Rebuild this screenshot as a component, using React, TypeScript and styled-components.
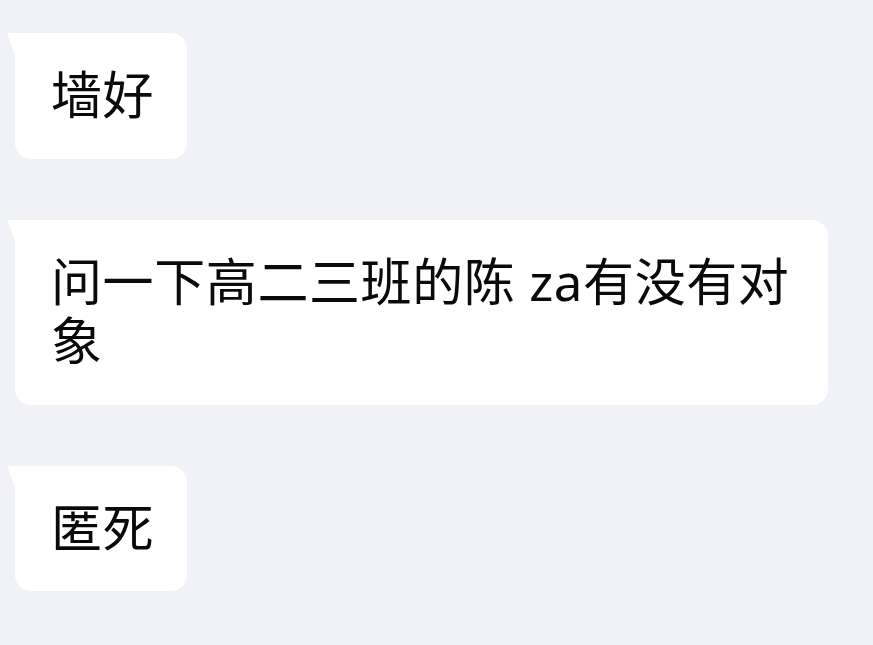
import React from 'react';
import styled, { createGlobalStyle } from 'styled-components';

const GlobalStyle = createGlobalStyle`
    html, body {
        margin: 0;
        padding: 0;
        background-color: #f1f2f7;
    }
`;

const ChatContainer = styled.div`
    display: flex;
    flex-direction: column;
    align-items: flex-start;
    gap: 61px;
    width: 873px;
    height: 645px;
    padding: 33px 0 0 15px;
    box-sizing: border-box;
    background-color: #f1f2f7;
    overflow: hidden;
`;

const Bubble = styled.div`
    position: relative;
    max-width: 813px;
    padding: 32px 33px 34px 36px;
    box-sizing: border-box;
    background-color: #ffffff;
    border-radius: 0 16px 16px 16px;
    color: #0a0a0a;
    font-family: 'Noto Sans', 'Noto Sans CJK SC', sans-serif;
    font-size: 51px;
    font-weight: 400;
    letter-spacing: 0.6px;
    line-height: 59.5px;

    &::before {
        content: '';
        position: absolute;
        top: 0;
        left: -8px;
        width: 8px;
        height: 22px;
        background-color: #ffffff;
        clip-path: polygon(0 0, 100% 0, 100% 100%);
    }
`;

const messages = [
    '墙好',
    '问一下高二三班的陈 za有没有对象',
    '匿死'
];

const App = () => {
    return (
        <>
            <GlobalStyle />
            <ChatContainer>
                {messages.map((text, i) => (
                    <Bubble key={i}>{text}</Bubble>
                ))}
            </ChatContainer>
        </>
    );
};

export default App;
